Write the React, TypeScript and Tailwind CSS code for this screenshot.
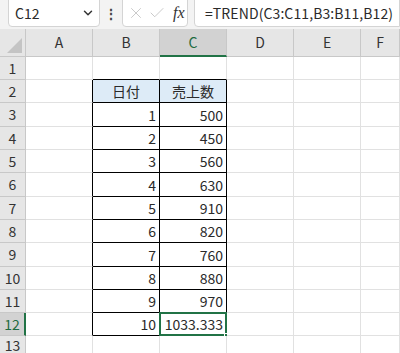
import { ChevronDown, X, Check } from 'lucide-react';

const cols = ['A', 'B', 'C', 'D', 'E', 'F'];
const rowHeights = [23, 23, 24, 23, 23, 24, 23, 23, 24, 23, 23, 23, 20];
const data: Record<number, [string, string]> = {
  2: ['日付', '売上数'],
  3: ['1', '500'],
  4: ['2', '450'],
  5: ['3', '560'],
  6: ['4', '630'],
  7: ['5', '910'],
  8: ['6', '820'],
  9: ['7', '760'],
  10: ['8', '880'],
  11: ['9', '970'],
  12: ['10', '1033.333'],
};

function Cell({ row, col }: { row: number; col: number }) {
  const inTable = row >= 2 && row <= 12 && (col === 1 || col === 2);
  const aboveTable = row === 1 && (col === 1 || col === 2);
  const leftOfTable = row >= 2 && row <= 12 && col === 0;
  const isHead = row === 2 && inTable;
  const value = data[row]?.[col - 1];
  const selected = row === 12 && col === 2;

  let border = 'border-r border-b border-[#e1e1e1]';
  if (inTable) border = 'border-r border-b border-black';
  else if (aboveTable) border = 'border-r border-b border-r-[#e1e1e1] border-b-black';
  else if (leftOfTable) border = 'border-r border-b border-r-black border-b-[#e1e1e1]';

  return (
    <div
      className={`relative flex items-center px-[3px] ${border} ${isHead ? 'justify-center bg-[#ddebf7]' : 'justify-end bg-white'} text-[14px] text-[#2a2a2a]`}
    >
      {value && <span className="leading-none">{value}</span>}
      {selected && (
        <>
          <div className="absolute -left-[1px] -top-[1px] -right-[1px] -bottom-[1px] border-2 border-[#217346]" />
          <div className="absolute -right-[4px] -bottom-[4px] w-[6px] h-[6px] bg-[#217346] border border-white" />
        </>
      )}
    </div>
  );
}

export default function App() {
  return (
    <div
      className="w-[400px] h-[353px] overflow-hidden bg-white text-[#2a2a2a]"
      style={{ fontFamily: '"Noto Sans CJK JP", "Noto Sans", sans-serif' }}
    >
      {/* formula bar */}
      <div className="h-[29px] bg-[#f3f3f3] flex items-end pb-[2px] overflow-hidden">
        <div className="ml-[8px] w-[92px] h-[31px] bg-white border border-[#d4d4d4] rounded-[4px] flex items-center justify-between pl-[6px] pr-[4px] pt-[3px]">
          <span className="text-[14px] leading-none">C12</span>
          <ChevronDown size={14} strokeWidth={2.5} className="text-[#333]" />
        </div>
        <div className="w-[22px] h-[27px] flex items-center justify-center text-[#444] text-[14px] font-bold">⋮</div>
        <div className="w-[66px] h-[31px] bg-white border border-[#d4d4d4] rounded-[4px] flex items-center pl-[4px] pt-[3px] gap-[3px]">
          <X size={18} strokeWidth={1} className="text-[#b8b8b8]" />
          <Check size={18} strokeWidth={1} className="text-[#b8b8b8]" />
          <span className="ml-[4px] text-[16px] italic text-[#333]" style={{ fontFamily: '"Liberation Serif", serif' }}>
            fx
          </span>
        </div>
        <div className="ml-[6px] flex-1 h-[31px] bg-white border border-[#d4d4d4] rounded-l-[4px] flex items-center pl-[10px] pt-[3px]">
          <span className="text-[14px] leading-none tracking-[0.1px]">=TREND(C3:C11,B3:B11,B12)</span>
        </div>
      </div>

      {/* grid */}
      <div className="grid grid-cols-[26px_67px_67px_67px_67px_67px_1fr]">
        {/* column headers */}
        <div className="relative h-[28px] bg-[#e6e6e6] border-r border-b border-[#c8c8c8]">
          <div
            className="absolute right-[3px] bottom-[3px] w-[15px] h-[15px] bg-[#c4c4c4]"
            style={{ clipPath: 'polygon(100% 0, 100% 100%, 0 100%)' }}
          />
        </div>
        {cols.map((c) => (
          <div
            key={c}
            className={
              c === 'C'
                ? 'h-[28px] bg-[#d2d2d2] border-r border-[#c8c8c8] border-b-2 border-b-[#217346] flex items-center justify-center text-[14px] text-[#1e6b41]'
                : 'h-[28px] bg-[#e6e6e6] border-r border-b border-[#c8c8c8] flex items-center justify-center text-[14px] text-[#333]'
            }
          >
            {c}
          </div>
        ))}

        {rowHeights.map((h, i) => {
          const row = i + 1;
          return [
            <div
              key={`h${row}`}
              style={{ height: h }}
              className={
                row === 12
                  ? 'bg-[#d2d2d2] border-b border-[#c8c8c8] border-r-2 border-r-[#217346] flex items-center justify-center text-[14px] text-[#1e6b41]'
                  : 'bg-[#e6e6e6] border-r border-b border-[#c8c8c8] flex items-center justify-center text-[14px] text-[#333]'
              }
            >
              {row}
            </div>,
            ...cols.map((_, ci) => <Cell key={`${row}-${ci}`} row={row} col={ci} />),
          ];
        })}
      </div>
    </div>
  );
}
